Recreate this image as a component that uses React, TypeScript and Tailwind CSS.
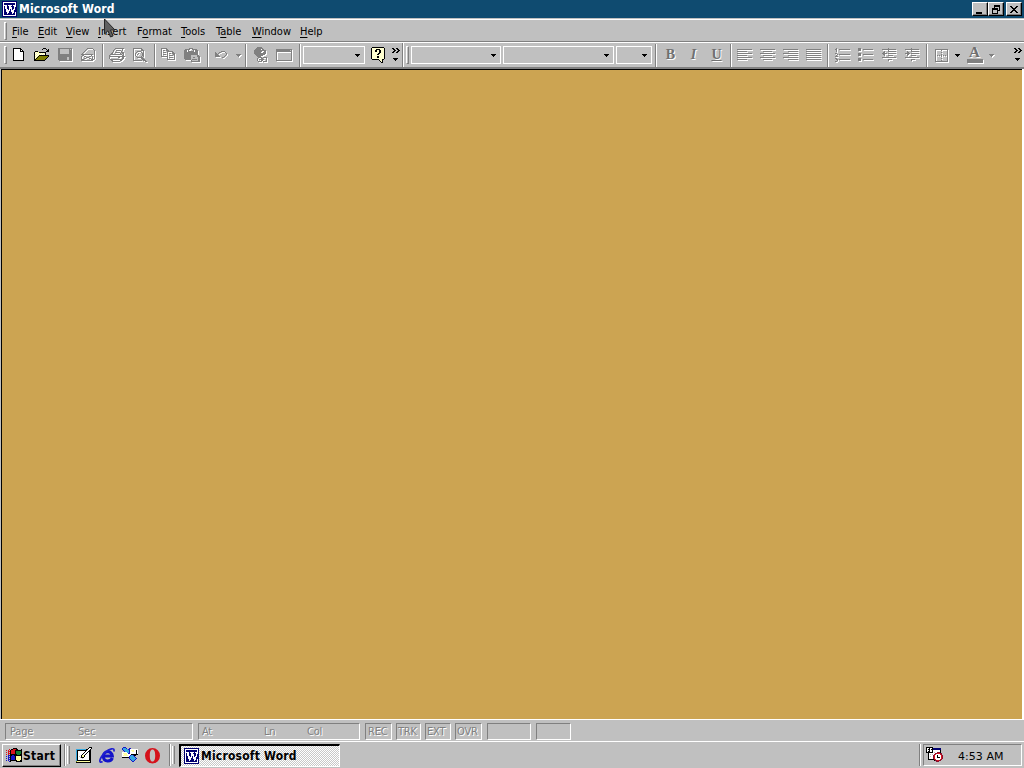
import type { ReactNode } from "react";

const COLORS: Record<string, string> = {
  k: "#000000",
  g: "#808080",
  w: "#ffffff",
  y: "#ffffa0",
  p: "#ffffd0",
  o: "#7f7f00",
  n: "#000070",
  b: "#1616c8",
  c: "#35a8e0",
  r: "#d8141c",
  m: "#8a1030",
  l: "#c0c0c0",
  e: "#108030",
};

const ICONS: Record<string, string[]> = {
  newDoc: [
    "",
    "...kkkkkkkk",
    "...kwwwwwwkk",
    "...kwwwwwwkwk",
    "...kwwwwwwkkkk",
    "...kwwwwwwwwwk",
    "...kwwwwwwwwwk",
    "...kwwwwwwwwwk",
    "...kwwwwwwwwwk",
    "...kwwwwwwwwwk",
    "...kwwwwwwwwwk",
    "...kwwwwwwwwwk",
    "...kwwwwwwwwwk",
    "...kkkkkkkkkkk",
  ],
  open: [
    "",
    ".........kkk",
    "........k...k.k",
    ".............kk",
    ".kkk........kkk",
    "kywyykkkkkkk",
    "kwywywywywyk",
    "kywywywywywk",
    "kwywykkkkkkkkkk",
    "kywykoooooooook",
    "kwykoooooooook",
    "kykoooooooook",
    "kkoooooooook",
    "kkkkkkkkkkk",
  ],
  save: [
    "",
    ".gggggggggggggg",
    ".gglllllllllglg",
    ".gglllllllllggg",
    ".gglllllllllggg",
    ".gglllllllllggg",
    ".gglllllllllggg",
    ".gggggggggggggg",
    ".gggggggggggggg",
    ".gggggggggggggg",
    ".gggggggggllggg",
    ".gggggggggllggg",
    ".gggggggggllggg",
    "..ggggggggggggg",
  ],
  mail: [
    "",
    ".......gggggg",
    "......g......g",
    ".....g........g",
    "....g.........g",
    "...g..........g",
    "..g...........g",
    ".gggggggggggg.g",
    "..gg.......g..g",
    ".g..gg...gg.g.g",
    ".g....ggg...g.g",
    ".g..gg...gg.g.g",
    ".ggg.......ggg",
    ".gggggggggggg",
  ],
  print: [
    "",
    "......ggggggggg",
    ".....g.......g",
    "....g..ggggg.g",
    "....g.......g",
    "...g..ggggg.ggg",
    "..gg.......g.gg",
    ".gggggggggggg.g",
    "g............gg",
    "gggggggggggggggg",
    "g........gg..gg",
    "g............gg",
    ".ggggggggggggg",
    "..gg.......gg",
    "...gggggggg",
  ],
  preview: [
    "",
    ".ggggggggg",
    ".g.......gg",
    ".g.......ggg",
    ".g...gggg..g",
    ".g..g....g.g",
    ".g.g..g...gg",
    ".g.g.g....gg",
    ".g.g......gg",
    ".g..g....g.g",
    ".g...gggggg",
    ".g.......ggg",
    ".g........ggg",
    ".ggggggggg.ggg",
    ".............gg",
  ],
  copy: [
    "",
    "gggggg",
    "g....gg",
    "g.gg.ggg",
    "g.....gggggg",
    "g.ggg.g....gg",
    "g.....g.gg.ggg",
    "g.ggg.g.....gg",
    "g.....g.gggg.g",
    "ggggggg......g",
    "......g.gggg.g",
    "......g......g",
    "......gggggggg",
  ],
  paste: [
    "",
    ".....gggg",
    ".ggggg..ggggg",
    "ggg.g....g.ggg",
    "ggg.gggggg.ggg",
    "gggggggggggggg",
    "gggggggggggggg",
    "gggggggggggggg",
    "gggggggllllllgg",
    "gggggggllllllggg",
    "gggggggllgglllgg",
    "ggggggglllllllgg",
    ".gggggglggggglgg",
    ".......gllllllgg",
    ".......ggggggggg",
  ],
  undo: [
    "",
    "",
    "",
    "",
    "......gggg",
    "g...gg....g",
    "gg.g.......g",
    "ggg........g",
    "gggg......g",
    "ggggg....g",
    ".......gg",
  ],
  link: [
    "....ggggg",
    "...ggggggg",
    "..gggggg.gg",
    ".gggggggggggg",
    ".gggggggg..gg",
    ".ggggggg..ggg",
    ".gggggggggggg",
    "..gggggggggg",
    "...ggggggg",
    "....gggg",
    ".....gggg.gggg",
    "....g...gg...g",
    "....g.ggggg..g",
    "....g...gg...g",
    ".....gggg.gggg",
  ],
  tables: [
    "",
    "",
    "gggggggggggggggg",
    "gggggggggggggglg",
    "gggggggggggggggg",
    "g..............g",
    "g..............g",
    "g..............g",
    "g..............g",
    "g..............g",
    "g..............g",
    "g..............g",
    "g..............g",
    "gggggggggggggggg",
  ],
  help: [
    ".kkkkkkkkkkkk",
    "kppppppppppppk",
    "kppppkkkkppppk",
    "kpppkkppkkpppk",
    "kpppkkppkkpppk",
    "kpppppppkkpppk",
    "kppppppkkppppk",
    "kpppppkkpppppk",
    "kppppppppppppk",
    "kpppppkkpppppk",
    "kpppppkkpppppk",
    "kppppppppppppk",
    ".kkkkkkkpppkk",
    "........kppk",
    ".........kpk",
    "..........kk",
  ],
  left: ["", "", "ggggggggggggggg", "", "gggggggggg", "", "ggggggggggggggg", "", "gggggggggg", "", "ggggggggggggggg", "", "gggggggggg"],
  center: ["", "", "ggggggggggggggg", "", "...ggggggggg", "", "ggggggggggggggg", "", "...ggggggggg", "", "ggggggggggggggg", "", "...ggggggggg"],
  right: ["", "", "ggggggggggggggg", "", ".....gggggggggg", "", "ggggggggggggggg", "", ".....gggggggggg", "", "ggggggggggggggg", "", ".....gggggggggg"],
  justify: ["", "", "ggggggggggggggg", "", "ggggggggggggggg", "", "ggggggggggggggg", "", "ggggggggggggggg", "", "ggggggggggggggg", "", "ggggggggggggggg"],
  numbers: [
    "",
    "..g",
    ".gg..ggggggggggg",
    "..g",
    "..g",
    "",
    ".gg",
    "...g.ggggggggggg",
    "..g",
    ".ggg",
    "",
    ".gg",
    "..gg.ggggggggggg",
    "...g",
    ".gg",
  ],
  bullets: [
    "",
    ".ggg",
    ".ggg..gggggggggg",
    ".ggg",
    "",
    "",
    ".ggg",
    ".ggg..gggggggggg",
    ".ggg",
    "",
    "",
    ".ggg",
    ".ggg..gggggggggg",
    ".ggg",
  ],
  outdent: [
    "",
    ".......g",
    ".gggggggggggggg",
    ".......g",
    "...g...gggggggg",
    "..gg",
    ".ggggg.gggggggg",
    "..gg",
    "...g...ggggg",
    "",
    ".gggggggggggggg",
    "",
    ".......gggg",
    ".......g",
  ],
  indent: [
    "",
    ".......g",
    ".gggggggggggggg",
    ".......g",
    "...g...gggggggg",
    "...gg",
    ".ggggg.gggggggg",
    "...gg",
    "...g...ggggg",
    "",
    ".gggggggggggggg",
    "",
    ".......gggg",
    ".......g",
  ],
  border: [
    "",
    "",
    ".ggggggggggggg",
    ".g.....g.....g",
    ".g...........g",
    ".g.....g.....g",
    ".g...........g",
    ".g.....g.....g",
    ".g.g.g.g.g.g.g",
    ".g.....g.....g",
    ".g...........g",
    ".g.....g.....g",
    ".g...........g",
    ".g.....g.....g",
    ".ggggggggggggg",
  ],
  word: [
    "nnnnnnnnnnnnnnn",
    "nwwwwwwwwwwwwwn",
    "nwnnnnnnnnnnnwn",
    "nwnnnnnnnnnnnwn",
    "nwwwwnwwwwnwwwn",
    "nwnwwnnwwnnnwwn",
    "nwnwwnnwwwnnwnn",
    "nwnwwnnwwwnnwnn",
    "nwnnwwnwnwnwwnn",
    "nwnnwwwwnwwwnnn",
    "nwnnwwwnnwwwnnn",
    "nwnnnwwnnnwwnwn",
    "nwnnnwnnnnwnnwn",
    "nwnnnnnnnnnnnwn",
    "nwwwwwwwwwwwwwn",
    "nnnnnnnnnnnnnnn",
  ],
  windows: [
    "",
    ".......kkkk",
    "...r.kkrrrkk...k",
    "r.r.krrrrkkkkkkk",
    "..rrkrrrrkeeeeek",
    "r.r.krrrrkeeeeek",
    "..rrkrrrrkeeeeek",
    "r.r.kkkkkkkeeekk",
    "..bbkkbbkkkkkkkk",
    "b.b.kbbbbkyyyyyk",
    "..bbkbbbbkyyyyyk",
    "b.b.kbbbbkyyyyyk",
    "..bbkbbbbkyyyyyk",
    "b.b.kkkkkkkyyykk",
    "...bk.....kkkkkk",
    "",
  ],
  desktop: [
    ".............kkk",
    "............kwwk",
    "cccccccccckkwwk",
    "ckkkkkkkkkkwwkk",
    "ckwwwwwwwkwwkkk",
    "ckwwwwwwkwwkwkk",
    "ckwwwwwkwwkwwkk",
    "ckwwwwkwwkwwwkk",
    "ckwwwkyykwwwwkk",
    "ckwlwkyykwwwwkk",
    "ckwwlkkkwwwwwkk",
    "ckwwwwlwwwwwwkk",
    "ckwwwwwwwwwwwkk",
    "ckkkkkkkkkkkkkk",
    "oyyyyyyyyyyyyyk",
    "kkkkkkkkkkkkkkk",
  ],
  outlook: [
    ".bbb",
    "bcccb..bb",
    "bcccccbbwwwwwwww",
    ".bcccccbwyyywwkw",
    "..bccccbwwyywwkw",
    "wwwwwccbwwwwwwkw",
    "wyyyywbbwwwwwwkw",
    "wwyyywwwwkkkkkkk",
    "wyyyyywwbccbkk",
    "wwwwwwwbccccb",
    "kkkkkkkbcccccb",
    ".......bccccccb",
    "........bccccb",
    ".........bccb",
    "..........bb",
  ],
  scheduler: [
    "kkkkkkk",
    "kwwkwwknnnnnnnn",
    "kwkkwkknnnnnnnn",
    "kwwkwwkwwwwwwwk",
    "kwkkwwkwwwwwwwk",
    "kkkkkkkwlwwmmmk",
    "..kwwwwwwmmrrrmm",
    "..kwlwlwmrwwwwrm",
    "..kwwwwmrwwkwwwrm",
    "..kwlwwmrwwkwwwrm",
    "..kwwwwmrwwkkkwrm",
    "..kwwwwmrwwwwwwrm",
    "..kkkkkkmrwwwwrm",
    "........kmmrrmm",
    "..........mmm",
  ],
};

function Icon({ name, disabled }: { name: string; disabled?: boolean }) {
  return (
    <svg
      width="17"
      height="16"
      viewBox="0 0 17 16"
      shapeRendering="crispEdges"
      className={disabled ? "block shrink-0 drop-shadow-[1px_1px_0_#ffffff]" : "block shrink-0"}
    >
      {ICONS[name].map((row, y) =>
        row.split("").map((ch, x) =>
          ch === "." ? null : <rect key={`${x}-${y}`} x={x} y={y} width="1" height="1" fill={COLORS[ch]} />
        )
      )}
    </svg>
  );
}

function Tool({ icon, disabled = true }: { icon: string; disabled?: boolean }) {
  return (
    <div className="flex h-full w-[23px] shrink-0 items-center justify-center">
      <Icon name={icon} disabled={disabled} />
    </div>
  );
}

function Letter({ children }: { children: ReactNode }) {
  return (
    <div className="flex h-full w-[23px] shrink-0 items-center justify-center font-['Liberation_Serif',serif] text-[14px] leading-none font-bold text-[#707070] [text-shadow:1px_1px_0_#ffffff]">
      {children}
    </div>
  );
}

function Sep() {
  return <div className="mx-[2px] h-[23px] w-[2px] shrink-0 border-l border-[#808080] bg-white" />;
}

function Handle() {
  return <div className="h-[18px] w-[3px] shrink-0 border-t border-r border-b border-l border-t-white border-r-[#808080] border-b-[#808080] border-l-white" />;
}

function Arrow({ disabled }: { disabled?: boolean }) {
  return (
    <svg
      width="5"
      height="3"
      viewBox="0 0 5 3"
      shapeRendering="crispEdges"
      className={disabled ? "block shrink-0 text-[#808080] drop-shadow-[1px_1px_0_#ffffff]" : "block shrink-0 text-black"}
    >
      <path d="M0 0h5v1H4v1H3v1H2V2H1V1H0z" fill="currentColor" />
    </svg>
  );
}

function More() {
  return (
    <svg width="9" height="16" viewBox="0 0 9 16" shapeRendering="crispEdges" className="block shrink-0">
      <path
        d="M0 1h2v1h1v1h1v1H3v1H2v1H0V5h1V4h1V3H1V2H0zM4 1h2v1h1v1h1v1H7v1H6v1H4V5h1V4h1V3H5V2H4zM1 11h5v1H5v1H4v1H3v-1H2v-1H1z"
        fill="#000"
      />
    </svg>
  );
}

function Combo({ className }: { className: string }) {
  return (
    <div className={`flex h-[18px] shrink-0 items-center justify-end border border-white pr-[4px] ${className}`}>
      <Arrow />
    </div>
  );
}

const MENUS = [
  { key: "F", rest: "ile", width: "w-[26px]" },
  { key: "E", rest: "dit", width: "w-[28px]" },
  { key: "V", rest: "iew", width: "w-[32px]" },
  { key: "I", rest: "nsert", width: "w-[39px]" },
  { pre: "F", key: "o", rest: "rmat", width: "w-[44px]" },
  { key: "T", rest: "ools", width: "w-[35px]" },
  { pre: "T", key: "a", rest: "ble", width: "w-[36px]" },
  { key: "W", rest: "indow", width: "w-[48px]" },
  { key: "H", rest: "elp", width: "w-[30px]" },
];

function CaptionButton({ d, className = "" }: { d: string; className?: string }) {
  return (
    <div className={`flex h-[14px] w-4 items-center justify-center border border-t-white border-r-black border-b-black border-l-white bg-[#c0c0c0] shadow-[inset_-1px_-1px_0_#808080] ${className}`}>
      <svg width="10" height="9" viewBox="0 0 10 9" shapeRendering="crispEdges" className="block">
        <path d={d} fill="#000" />
      </svg>
    </div>
  );
}

function TitleBar() {
  return (
    <div className="flex h-[18px] items-center bg-[#0f4b70] pr-[2px] pl-[2px]">
      <Icon name="word" />
      <span className="text-[12px] leading-[18px] font-bold tracking-[0.2px] text-white">Microsoft Word</span>
      <div className="ml-auto flex">
        <CaptionButton d="M1 7h6v2H1z" />
        <CaptionButton d="M3 0h6v6H7V5h1V2H4v1H3zM1 3h6v6H1zM2 5v3h4V5z" />
        <CaptionButton className="ml-[2px]" d="M1 1h2v1h1v1h2V2h1V1h2v1H8v1H7v1H6v1h1v1h1v1h1v1H7V7H6V6H4v1H3v1H1V7h1V6h1V5h1V4H3V3H2V2H1z" />
      </div>
    </div>
  );
}

function MenuBar() {
  return (
    <div className="mt-[1px] flex h-[23px] items-center border-t border-b border-t-white border-b-[#808080] pl-[4px]">
      <Handle />
      <div className="mt-[3px] ml-[5px] flex text-[11px] tracking-[0px]">
        {MENUS.map((m) => (
          <span key={m.key + m.rest} className={`whitespace-nowrap ${m.width}`}>
            {m.pre}
            <span className="underline underline-offset-[2px]">{m.key}</span>
            {m.rest}
          </span>
        ))}
      </div>
    </div>
  );
}

function Toolbar() {
  return (
    <div className="flex h-[27px] items-center border-t border-b-2 border-t-white border-b-[#808080] pl-[4px]">
      <Handle />
      <Tool icon="newDoc" disabled={false} />
      <div className="w-[1px]" />
      <Tool icon="open" disabled={false} />
      <Tool icon="save" />
      <Tool icon="mail" />
      <Sep />
      <Tool icon="print" />
      <Tool icon="preview" />
      <Sep />
      <Tool icon="copy" />
      <Tool icon="paste" />
      <div className="w-[1px]" />
      <Sep />
      <div className="w-[1px]" />
      <Tool icon="undo" />
      <div className="-ml-[2px] flex w-[10px] justify-center">
        <Arrow disabled />
      </div>
      <Sep />
      <div className="w-[1px]" />
      <Tool icon="link" />
      <Tool icon="tables" />
      <div className="w-[1px]" />
      <Sep />
      <Combo className="w-[62px]" />
      <div className="flex w-[27px] justify-center pl-[2px]">
        <Icon name="help" />
      </div>
      <More />
      <div className="ml-[1px] flex h-full w-[4px] border-l border-[#808080]">
        <div className="h-full w-[1px] bg-white" />
      </div>
      <Handle />
      <Combo className="ml-[2px] w-[90px]" />
      <Combo className="ml-[2px] w-[111px]" />
      <Combo className="ml-[2px] w-[36px]" />
      <div className="w-[1px]" />
      <Sep />
      <div className="flex h-full">
        <Letter>B</Letter>
        <Letter>
          <i>I</i>
        </Letter>
        <Letter>
          <span className="underline underline-offset-[1px]">U</span>
        </Letter>
      </div>
      <Sep />
      <Tool icon="left" />
      <Tool icon="center" />
      <Tool icon="right" />
      <Tool icon="justify" />
      <div className="-ml-[1px]" />
      <Sep />
      <Tool icon="numbers" />
      <Tool icon="bullets" />
      <div className="w-[1px]" />
      <Tool icon="outdent" />
      <Tool icon="indent" />
      <Sep />
      <div className="w-[1px]" />
      <Tool icon="border" />
      <div className="-ml-[2px] flex w-[10px] justify-center">
        <Arrow />
      </div>
      <div className="ml-[1px] flex w-[23px] flex-col items-center font-['Liberation_Serif',serif] text-[15px] leading-[11px] font-bold text-[#707070] [text-shadow:1px_1px_0_#ffffff]">
        A
        <div className="mt-[1px] h-[4px] w-[16px] bg-[#808080] shadow-[1px_1px_0_#ffffff]" />
      </div>
      <div className="flex w-[11px] justify-center">
        <Arrow disabled />
      </div>
      <div className="mr-[1px] ml-auto">
        <More />
      </div>
    </div>
  );
}

const INSET = "border border-t-[#808080] border-r-white border-b-white border-l-[#808080]";

function StatusBar() {
  return (
    <div className="flex h-[22px] items-center border-t border-white pt-[1px] pl-[5px] text-[11px] leading-none tracking-[-0.2px] text-[#808080] [text-shadow:1px_1px_0_#ffffff]">
      <div className={`flex h-[17px] w-[188px] items-center pl-[4px] ${INSET}`}>
        <span className="w-[68px]">Page</span>
        <span>Sec</span>
      </div>
      <div className={`ml-[5px] flex h-[17px] w-[162px] items-center pl-[3px] ${INSET}`}>
        <span className="w-[62px]">At</span>
        <span className="w-[43px]">Ln</span>
        <span>Col</span>
      </div>
      <div className="ml-[5px] flex gap-[4px]">
        <div className={`flex h-[17px] w-[27px] items-center pl-[2px] ${INSET}`}>REC</div>
        <div className={`flex h-[17px] w-[25px] items-center pl-[1px] ${INSET}`}>TRK</div>
        <div className={`flex h-[17px] w-[26px] items-center pl-[1px] ${INSET}`}>EXT</div>
        <div className={`flex h-[17px] w-[27px] items-center pl-[1px] ${INSET}`}>OVR</div>
        <div className={`ml-[1px] h-[17px] w-[44px] ${INSET}`} />
        <div className={`ml-[1px] h-[17px] w-[35px] ${INSET}`} />
      </div>
    </div>
  );
}

function Taskbar() {
  return (
    <div className="flex h-[27px] items-center border-t border-white pl-[2px]">
      <div className="flex h-[23px] w-[59px] items-center border border-t-white border-r-black border-b-black border-l-white pl-[3px] shadow-[inset_-1px_-1px_0_#808080]">
        <Icon name="windows" />
        <span className="mt-[1px] text-[12px] font-bold tracking-[0.3px]">Start</span>
      </div>
      <div className="ml-[3px] flex items-center">
        <div className="h-[22px] w-[2px] border-l border-[#808080] bg-white" />
        <div className="ml-[1px] h-[18px] w-[3px] border-r border-l border-r-[#808080] border-l-white" />
      </div>
      <div className="ml-[6px] flex items-center gap-[6px]">
        <Icon name="desktop" />
        <svg width="17" height="17" viewBox="0 0 17 17" className="block">
          <path d="M13.3 11C12.3 14.6 4.8 15.6 4.3 9.6 3.8 3.9 13 2.8 13.4 9H5" fill="none" stroke="#1414c8" strokeWidth="3" />
          <path d="M3.6 14.6C-.8 17 .2 11 6 5.6 10 2 16.4-.4 14.8 4.6" fill="none" stroke="#2020d0" strokeWidth="1.7" />
        </svg>
        <Icon name="outlook" />
        <svg width="16" height="17" viewBox="0 0 16 17" className="block">
          <path fillRule="evenodd" d="M7.5 1a7.5 7.7 0 1 0 0 15.4A7.5 7.7 0 0 0 7.5 1zm0 1.6c2 0 2.7 2.4 2.7 6s-.7 6-2.7 6-2.7-2.4-2.7-6 .7-6 2.7-6z" fill="#d5121b" />
        </svg>
      </div>
      <div className="ml-[8px] flex items-center">
        <div className="h-[22px] w-[2px] border-l border-[#808080] bg-white" />
        <div className="ml-[1px] h-[18px] w-[3px] border-r border-l border-r-[#808080] border-l-white" />
      </div>
      <div className="ml-[4px] flex h-[23px] w-[161px] items-center border-t-2 border-r border-b border-l-2 border-t-black border-r-white border-b-white border-l-black bg-[repeating-conic-gradient(#ffffff_0_25%,#c8c8c8_0_50%)] bg-[length:2px_2px] pl-[3px]">
        <Icon name="word" />
        <span className="mt-[1px] text-[12px] font-bold tracking-[0.2px]">Microsoft Word</span>
      </div>
      <div className="mr-[2px] ml-auto flex items-center">
        <div className="h-[22px] w-[2px] border-l border-[#808080] bg-white" />
        <div className={`ml-[2px] flex h-[22px] w-[99px] items-center pl-[2px] ${INSET}`}>
          <Icon name="scheduler" />
          <span className="mt-[4px] ml-[15px] font-['DejaVu_Sans',sans-serif] text-[11px] tracking-[0.05px] whitespace-nowrap">4:53 AM</span>
        </div>
      </div>
    </div>
  );
}

export default function App() {
  return (
    <div className="relative flex h-[768px] w-[1024px] flex-col overflow-hidden bg-[#c0c0c0] font-['DejaVu_Sans_Condensed','DejaVu_Sans',sans-serif] text-black">
      <TitleBar />
      <MenuBar />
      <Toolbar />
      <div className="flex-1 border-r-2 border-white pl-[1px]">
        <div className="h-full border-t border-l border-black bg-[#cca452]" />
      </div>
      <StatusBar />
      <Taskbar />
      <svg width="13" height="21" viewBox="0 0 13 21" className="absolute top-[18px] left-[103px]">
        <path d="M1.5 1v15l3.4-3.2 2.6 6.2 2.6-1.1-2.6-5.9H12z" fill="#606060" stroke="#262626" />
      </svg>
    </div>
  );
}
